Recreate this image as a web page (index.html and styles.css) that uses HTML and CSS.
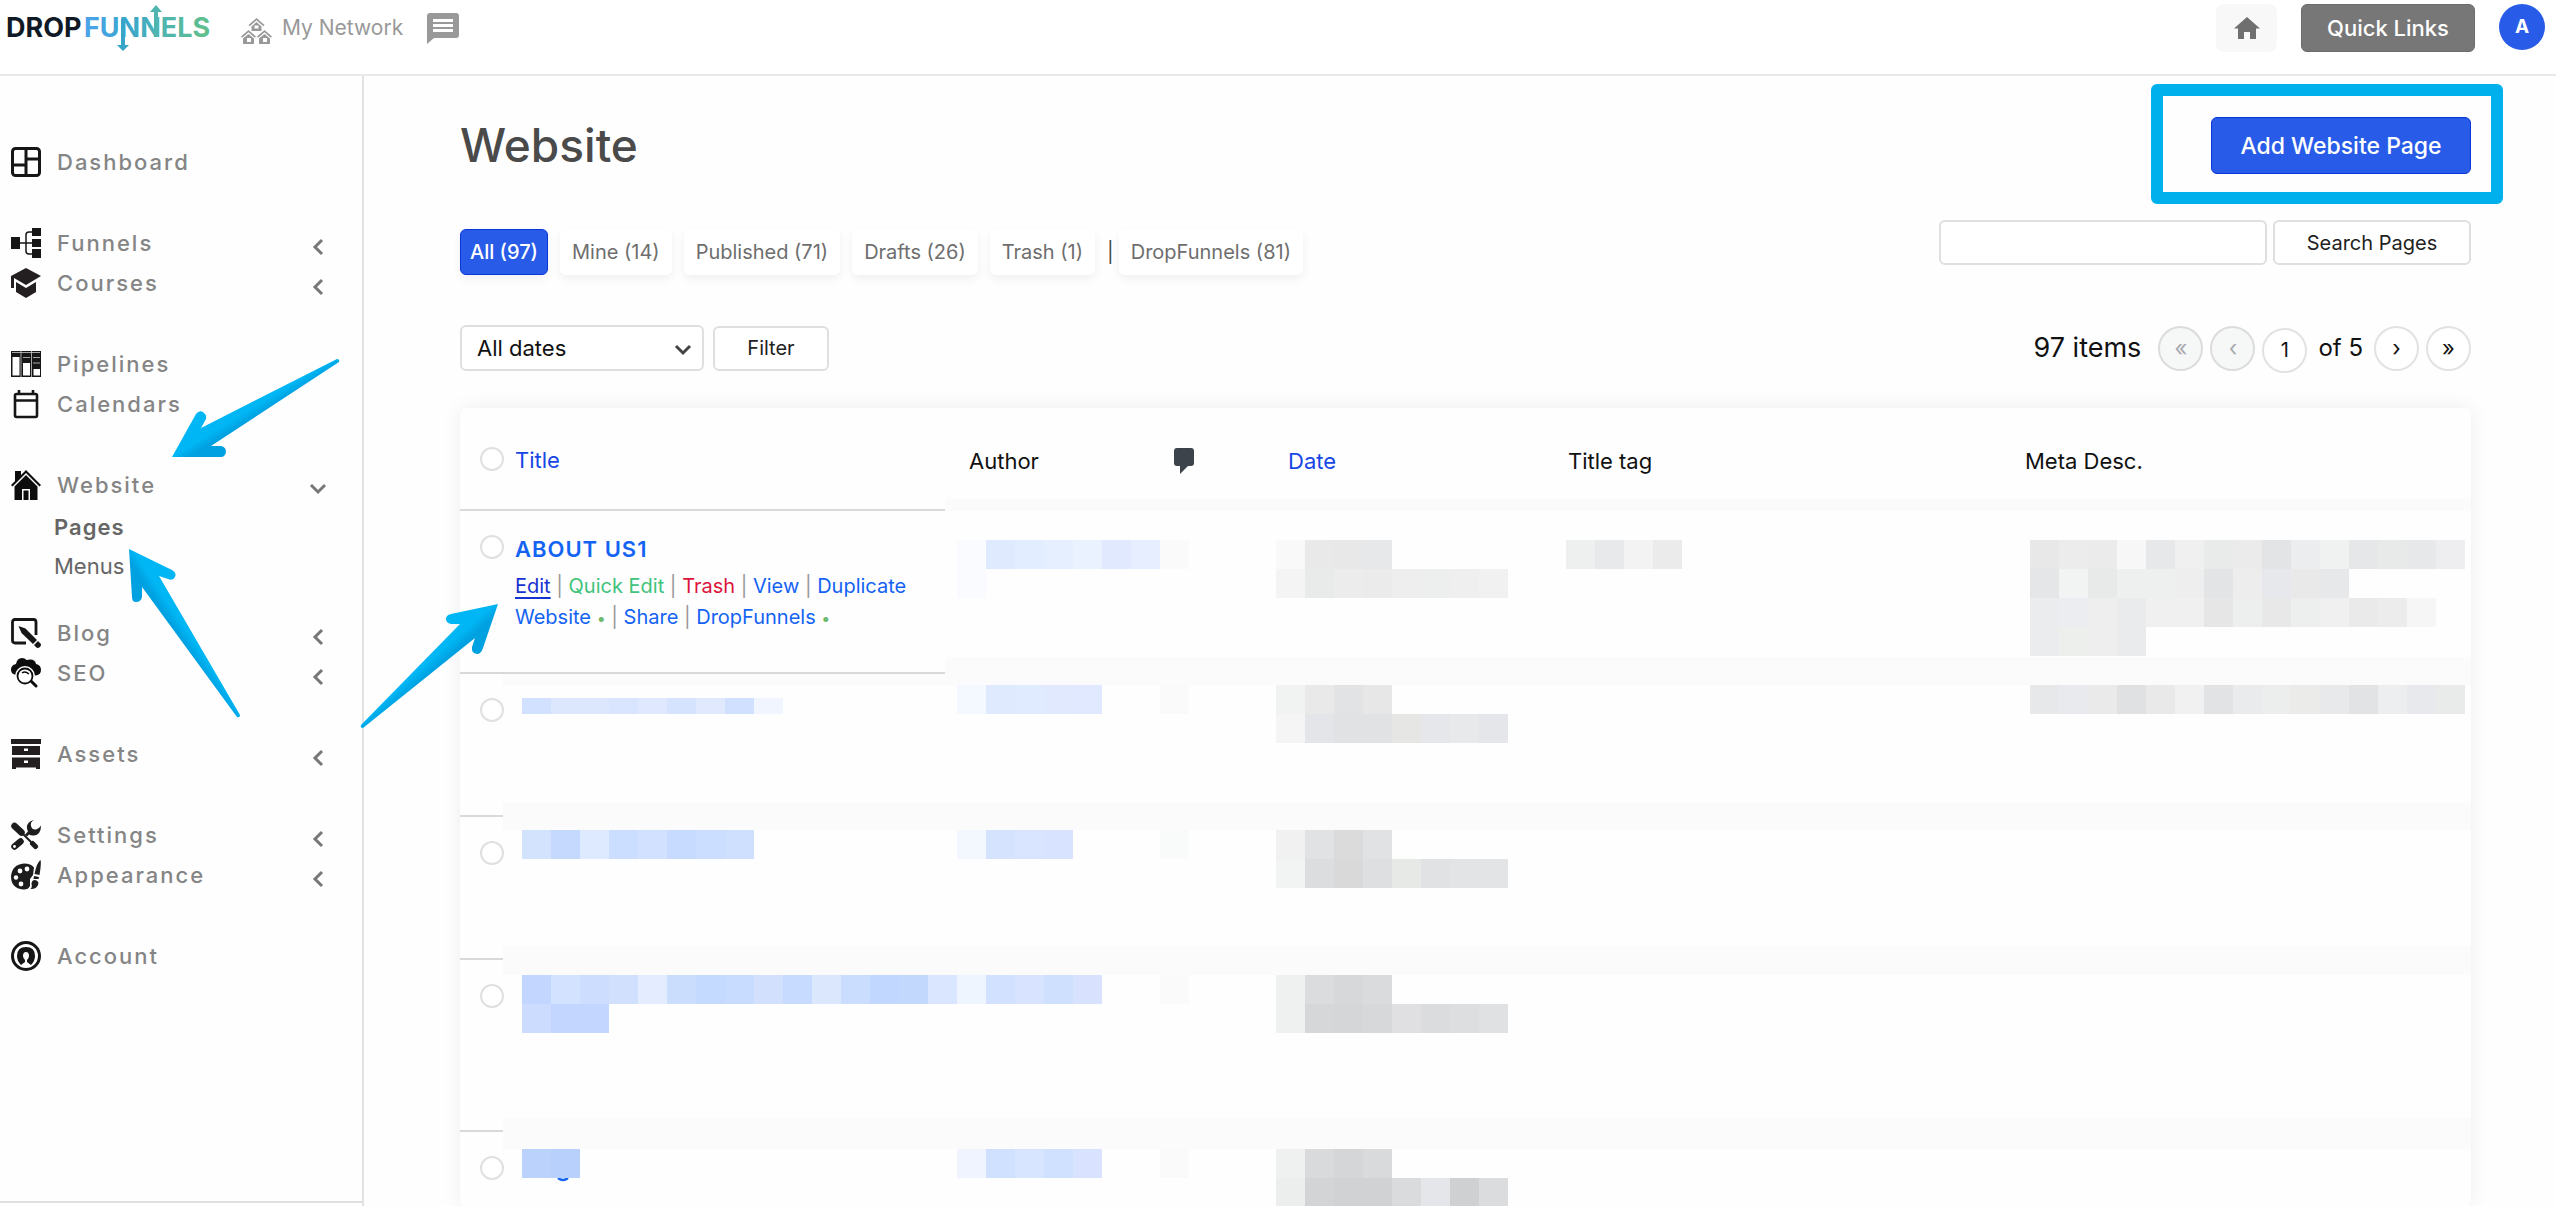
FILE: index.html
```html
<!DOCTYPE html>
<html lang="en">
<head>
<meta charset="utf-8">
<title>Website - DropFunnels</title>
<link rel="stylesheet" href="styles.css">
</head>
<body>
<header class="topbar">
  <a class="logo" href="#" aria-label="DropFunnels">
    <svg width="206" height="48" viewBox="0 0 206 48">
      <defs>
        <linearGradient id="brand" gradientUnits="userSpaceOnUse" x1="80" y1="0" x2="200" y2="0">
          <stop offset="0" stop-color="#4ba3ea"/><stop offset=".35" stop-color="#3aa6cc"/><stop offset=".65" stop-color="#4fb5ae"/><stop offset="1" stop-color="#5fbf8e"/>
        </linearGradient>
      </defs>
      <text class="logo-text" x="0" y="33" fill="#101a26">DROP</text>
      <text class="logo-text" x="78" y="33" fill="url(#brand)">FUNNELS</text>
      <path fill="#4fb5ae" d="M148 33V8h-4l6-7 6 7h-4v25z"/>
      <path fill="#37a5c8" d="M115 15h4v26h4l-6 6-6-6h4z"/>
    </svg>
  </a>
  <a class="network" href="#">
    <svg width="31" height="26" viewBox="0 0 31 26" fill="#999">
      <path d="M15.500 0 7.500 7l1.200 1.200 6.800-5.900 6.800 5.900L23.500 7zM15.500 4l-5 4.400V13h10V8.400zM13.500 7.500h4v3h-4z" fill-rule="evenodd"/>
      <path id="hut" d="M7.500 12 0 18.500l1.200 1.200 6.300-5.400 6.300 5.400 1.200-1.200zM7.500 16l-5.500 4.600V26h11v-5.400zM6 20h4v4H6z" fill-rule="evenodd"/>
      <use href="#hut" x="16"/>
    </svg>
    <span>My Network</span>
  </a>
  <a class="chat" href="#" aria-label="Messages">
    <svg width="32" height="31" viewBox="0 0 32 31"><path fill="#999" d="M3 0h26a3 3 0 0 1 3 3v19a3 3 0 0 1-3 3H7l-7 6V3a3 3 0 0 1 3-3z"/><path stroke="#fff" stroke-width="3" d="M6 7.500h20M6 12.500h20M6 17.500h20"/></svg>
  </a>
  <div class="topbar-end">
    <button class="home" aria-label="Home"><svg width="26" height="22" viewBox="0 0 26 22"><path fill="#6f6f6f" d="M13 0 0 11.500h4V22h6v-7h6v7h6V11.500h4z"/></svg></button>
    <button class="quick">Quick Links</button>
    <button class="avatar" aria-label="Profile">A</button>
  </div>
</header>

<div class="layout">
<nav class="sidebar">
  <ul class="group">
    <li><a class="item" href="#"><svg class="icon" viewBox="0 0 30 30"><g fill="none" stroke="#161616" stroke-width="3"><rect x="1.500" y="1.500" width="27" height="27" rx="3"/><path d="M15 2v26M2 18h13M15 12h13"/></g></svg>Dashboard</a></li>
  </ul>
  <ul class="group">
    <li><a class="item" href="#"><svg class="icon" viewBox="0 0 30 30"><path fill="#161616" d="M0 9h9v12H0zM21 0h9v8h-9zM21 11h9v8h-9zM21 21h9v9h-9z"/><path fill="none" stroke="#161616" stroke-width="1.500" d="M8 15h14M22 4h-4q-3 0-3 3v16q0 3 3 3h4"/></svg>Funnels<svg class="chev" viewBox="0 0 12 18"><path d="M10 2 3 9l7 7"/></svg></a></li>
    <li><a class="item" href="#"><svg class="icon" viewBox="0 0 30 30" fill="#231f20"><path d="M15 0 30 8 15 17 3 10v10H0V8zM5 14l10 6 10-6v10l-10 6-10-6z"/></svg>Courses<svg class="chev" viewBox="0 0 12 18"><path d="M10 2 3 9l7 7"/></svg></a></li>
  </ul>
  <ul class="group">
    <li><a class="item" href="#"><svg class="icon" viewBox="0 0 30 30"><path fill="#161616" fill-rule="evenodd" d="M0 2h30v26H0zM1.500 8h7v18.500h-7zM12 14h7v12.500h-7zM22.500 20h6.500v6.500h-6.500z"/><path stroke="#ccc" stroke-width=".8" d="M10 2v26M20.500 2v26M1 3.500h28M12 8.500h7M22 8.500h7M22 14h7"/></svg>Pipelines</a></li>
    <li><a class="item" href="#"><svg class="icon" viewBox="0 0 30 30"><g fill="none" stroke="#161616" stroke-width="2.600"><rect x="4" y="5" width="22" height="23" rx="1.500"/><path d="M4 11.500h22M8 1v4M22 1v4"/></g></svg>Calendars</a></li>
  </ul>
  <ul class="group group-open">
    <li><a class="item" href="#"><svg class="icon" viewBox="0 0 30 30" fill="#0d0d0d"><path d="M4 1h6v4l-6 6zM15 0 0 15l1.500 1.500L15 3l13.500 13.500L30 15z"/><path fill-rule="evenodd" d="M15 5 3.500 16.500V30h23V16.500zM11 30V19h8v11zM12.500 30h5v-9.500h-5z"/></svg>Website<svg class="chev chev-down" viewBox="0 0 18 12"><path d="m2 2 7 7 7-7"/></svg></a>
      <ul class="submenu">
        <li><a class="subitem current" href="#">Pages</a></li>
        <li><a class="subitem" href="#">Menus</a></li>
      </ul>
    </li>
  </ul>
  <ul class="group">
    <li><a class="item" href="#"><svg class="icon" viewBox="0 0 30 30"><path fill="none" stroke="#161616" stroke-width="2.800" d="M15 25H4q-2.500 0-2.500-2.500V4Q1.500 1.500 4 1.500h18.500Q25 1.500 25 4v13"/><path fill="#161616" d="m7.500 8 7 2.500L26 22l-4 4L10.500 15zM27 23l3 3q0 4-4 4l-3-3z"/></svg>Blog<svg class="chev" viewBox="0 0 12 18"><path d="M10 2 3 9l7 7"/></svg></a></li>
    <li><a class="item" href="#"><svg class="icon" viewBox="0 0 30 30"><path fill="#0d0d0d" d="M5 17Q0 16 0 11.500 0 7 5 6 6 0 11 0q3 0 4.500 2Q24 0 25 6q5 1 5 6 0 4.500-5 5.500z"/><circle cx="14" cy="18" r="10" fill="#fff"/><path fill="none" stroke="#0d0d0d" stroke-width="3" stroke-linecap="round" d="m20 23 5 5"/><circle cx="14" cy="18" r="7.500" fill="#fff" stroke="#0d0d0d" stroke-width="1.800"/><path fill="none" stroke="#0d0d0d" stroke-width="1.500" d="M11 15q3-2.500 7 1"/></svg>SEO<svg class="chev" viewBox="0 0 12 18"><path d="M10 2 3 9l7 7"/></svg></a></li>
  </ul>
  <ul class="group">
    <li><a class="item" href="#"><svg class="icon" viewBox="0 0 30 30"><path fill="#231f20" fill-rule="evenodd" d="M0 0h30v5H0zM1 7h28v9H1zM13 9.500v2.500h4V9.500zM1 18.500h28V30h-4v-1.500H5V30H1zM13 21.500V24h4v-2.500z"/></svg>Assets<svg class="chev" viewBox="0 0 12 18"><path d="M10 2 3 9l7 7"/></svg></a></li>
  </ul>
  <ul class="group">
    <li><a class="item" href="#"><svg class="icon" viewBox="0 0 30 30"><g fill="none" stroke="#1d1d1d" stroke-linecap="round"><path stroke-width="6.500" d="m3.500 6 7 6.500"/><path stroke-width="2" d="m12 14 9 9"/><path stroke-width="5" d="m21.500 23.500 3 3"/><path stroke-width="6.500" d="m3.500 26.500 6-5"/></g><path fill="#1d1d1d" d="M23 0q-4 2-3 6 1 4 5 3.500 3-.5 5-4 0 9-7 10-3 .4-5-1l-2 2-2-2 3-3Q13 3 23 0z"/><circle cx="3.500" cy="26.500" r="1.400" fill="#fff"/></svg>Settings<svg class="chev" viewBox="0 0 12 18"><path d="M10 2 3 9l7 7"/></svg></a></li>
    <li><a class="item" href="#"><svg class="icon" viewBox="0 0 30 30"><path fill="#1d1d1d" d="M13 3.500q7 0 10 4L22 15l-3 4 0 7q-2 4-7 3.500Q0 28 0 16.500 1 4.500 13 3.500zM29.500 0q1 3-1 15l-5-1Q26 2 29.500 0zM23 16l5 1-.5 2h-5zM19.500 29q2-2 1-5 0-4 3.500-4 4.500 1 3 5-2 4.500-7.500 4z"/><g fill="#fff"><circle cx="9" cy="11" r="2.400"/><circle cx="16" cy="9" r="2.400"/><circle cx="5" cy="17.500" r="2.200"/><circle cx="10" cy="24" r="2.400"/></g></svg>Appearance<svg class="chev" viewBox="0 0 12 18"><path d="M10 2 3 9l7 7"/></svg></a></li>
  </ul>
  <ul class="group">
    <li><a class="item" href="#"><svg class="icon" viewBox="0 0 30 30"><circle cx="15" cy="15" r="13.500" fill="none" stroke="#161616" stroke-width="3"/><path fill="#161616" d="M10 24Q6 20 6 15q0-9 9-9t9 9q0 5-4 9l-4-3v-2q2-2 2-4 0-4-3-4t-3 4q0 2 2 4v2z"/></svg>Account</a></li>
  </ul>
  <hr class="sidebar-end">
</nav>

<main class="main">
  <div class="heading">
    <h1>Website</h1>
    <div class="callout"><button class="add">Add Website Page</button></div>
  </div>

  <div class="toolbar">
    <div class="tabs">
      <a class="tab active" href="#">All (97)</a>
      <a class="tab" href="#">Mine (14)</a>
      <a class="tab" href="#">Published (71)</a>
      <a class="tab" href="#">Drafts (26)</a>
      <a class="tab" href="#">Trash (1)</a>
      <span class="tab-sep">|</span>
      <a class="tab" href="#">DropFunnels (81)</a>
    </div>
    <form class="search">
      <input class="field" type="text" aria-label="Search Pages">
      <button class="btn btn-search" type="button">Search Pages</button>
    </form>
  </div>

  <div class="filters">
    <div class="dates">
      <select class="select" aria-label="Filter by date"><option>All dates</option></select>
      <svg class="select-arrow" viewBox="0 0 18 12"><path d="m2 2 7 7 7-7"/></svg>
    </div>
    <button class="btn btn-filter">Filter</button>
    <div class="pager">
      <span class="count">97 items</span>
      <button class="round" disabled>«</button>
      <button class="round" disabled>‹</button>
      <input class="round page-no" type="text" value="1" aria-label="Current page">
      <span class="total">of 5</span>
      <button class="round">›</button>
      <button class="round">»</button>
    </div>
  </div>

  <table class="pages">
    <colgroup><col class="c-check"><col class="c-title"><col class="c-author"><col class="c-comments"><col class="c-date"><col class="c-tag"><col class="c-meta"></colgroup>
    <thead>
      <tr>
        <th class="check ruled"><input type="checkbox" aria-label="Select all"></th>
        <th class="title ruled"><a href="#">Title</a></th>
        <th class="inset">Author</th>
        <th><svg width="20" height="26" viewBox="0 0 20 26" role="img" aria-label="Comments"><path fill="#3c434a" d="M3 0h14a3 3 0 0 1 3 3v12a3 3 0 0 1-3 3h-3l-8 8v-8H3a3 3 0 0 1-3-3V3a3 3 0 0 1 3-3z"/></svg></th>
        <th class="inset"><a href="#">Date</a></th>
        <th>Title tag</th>
        <th class="snug">Meta Desc.</th>
      </tr>
    </thead>
    <tbody>
      <tr>
        <td class="check ruled"><input type="checkbox" aria-label="Select ABOUT US1"></td>
        <td class="title ruled">
          <a class="page-name" href="#">ABOUT US1</a>
          <div class="actions"><a class="edit" href="#">Edit</a> <span>|</span> <a class="quick-edit" href="#">Quick Edit</a> <span>|</span> <a class="trash" href="#">Trash</a> <span>|</span> <a href="#">View</a> <span>|</span> <a href="#">Duplicate Website</a> <i>•</i> <span>|</span> <a href="#">Share</a> <span>|</span> <a href="#">DropFunnels</a> <i>•</i></div>
        </td>
        <td class="band" data-cells="fafbff dfeaff e2edff e5efff ebf2ff e1e9ff e7eeff/fafbff"></td>
        <td class="band flush" data-cells="fafafa"></td>
        <td class="band" data-cells="f9f9f9 e9e9e9 e8e8e8 e7e8e9/f4f4f4 e8ebea ececec ebebeb eeeeee edefee efefef f1f1f1"></td>
        <td class="band" data-cells="eeefef e8e9eb f3f3f3 ebebeb"></td>
        <td class="band" data-cells="e8e8e8 ececec ebebeb f7f7f7 e7e8ea eff0ef e9ebea ecebeb e3e4e6 ecedef f0f2f1 e5e7e8 e8eae9 e7e8ea eeeef1/e5e6e8 f2f4f3 e8eae9 eef0ef eef0ef eeeeee e3e4e6 ededed e7e8eb e9e9e9 e7e8ea/ebecee ecedf0 eeeeee eaebed f0f0f0 f0f0f0 e6e6e6 ecefed e8e8e8 edefee f0f0f0 eaeaea ececec f6f6f6/ebecee edefed eeeeee eaebed"></td>
      </tr>
      <tr>
        <td class="check ruled"><input type="checkbox" aria-label="Select row 2"></td>
        <td class="title short band" data-height="16" data-cells="d2e1ff dce6fd dce6fd d9e5ff dfe8ff d6e3ff e1e9ff d1e0ff f0f5ff"></td>
        <td class="band" data-cells="f4f8ff dfeaff e1ebff e1e9ff e0e9ff"></td>
        <td class="band flush" data-cells="fafafa"></td>
        <td class="band" data-cells="f1f3f2 e9e9e9 e2e3e5 e7e7e7/f5f5f5 e4e5e8 e1e2e4 e1e2e4 e6e6e5 e6e7ea e8e9ea e5e6e9"></td>
        <td class="band"></td>
        <td class="band" data-cells="e7e8ea e9eaed eaeaea e0e1e3 e9e9e9 f1f1f1 e2e3e5 eaebed eceeed ebebea e8e9eb e2e3e5 edeef0 e8e9ec e9ebea"></td>
      </tr>
      <tr>
        <td class="check ruled"><input type="checkbox" aria-label="Select row 3"></td>
        <td class="title band" data-cells="d3e3fd c5d9ff deeaff cbdeff d1e1ff c6dbff ccdeff cfe0ff"></td>
        <td class="band" data-cells="f3f8ff d6e3ff d9e4ff d8e4ff"></td>
        <td class="band flush" data-cells="f9fbfa"></td>
        <td class="band" data-cells="f0f1f0 e1e2e4 dbdbdc e1e2e4/f2f4f3 dcddde d9d9da dedfe1 e7e9e7 e1e2e4 e3e4e6 e3e4e6"></td>
        <td class="band"></td>
        <td class="band"></td>
      </tr>
      <tr>
        <td class="check ruled"><input type="checkbox" aria-label="Select row 4"></td>
        <td class="title band" data-cells="c2d6ff d2e2ff cdddfd d1e1fd e3edff cbddfd c5daff c8dcff d3e0fd c6dbff dae7fc cbddff c2d7ff c2d8fd dae6ff/ccdcff c2d6ff c2d6ff"></td>
        <td class="band" data-cells="eef5ff d2e1ff d8e4ff cfe0ff d8e2ff"></td>
        <td class="band flush" data-cells="fafafa"></td>
        <td class="band" data-cells="eff0f0 dbdcde d7d8d9 dadbdd/eff0f0 d6d7d9 d5d6d8 d7d8d9 e0e0e2 dbdcde dddedf e0e1e2"></td>
        <td class="band"></td>
        <td class="band"></td>
      </tr>
      <tr>
        <td class="check"><input type="checkbox" aria-label="Select row 5"></td>
        <td class="title band" data-cells="bbd3fc b8d1fc"><svg class="peek" width="12" height="4" viewBox="0 0 12 4"><path fill="none" stroke="#1463f3" stroke-width="2.500" d="M1 0q5 4 10 0"/></svg></td>
        <td class="band" data-cells="eff4ff d0e0ff d8e5ff d0e0ff d9e3ff"></td>
        <td class="band flush" data-cells="fafafa"></td>
        <td class="band" data-cells="eff0f0 d9dadc d5d6d8 d9dadc/eceeed d3d4d6 d1d2d3 d1d2d4 dadbdc e5e6e9 cfd0d1 dbdcde"></td>
        <td class="band"></td>
        <td class="band"></td>
      </tr>
    </tbody>
  </table>
</main>
</div>

<svg class="arrows" width="520" height="740" viewBox="0 0 520 740" aria-hidden="true">
  <defs>
    <linearGradient id="a1" gradientUnits="userSpaceOnUse" x1="200" y1="430" x2="211" y2="448"><stop offset=".4" stop-color="#00b6f4"/><stop offset=".8" stop-color="#00a1e1"/></linearGradient>
    <linearGradient id="a2" gradientUnits="userSpaceOnUse" x1="162" y1="578" x2="144" y2="590"><stop offset=".4" stop-color="#00b6f4"/><stop offset=".8" stop-color="#00a1e1"/></linearGradient>
    <linearGradient id="a3" gradientUnits="userSpaceOnUse" x1="459" y1="623" x2="474" y2="640"><stop offset=".4" stop-color="#00b6f4"/><stop offset=".8" stop-color="#00a1e1"/></linearGradient>
  </defs>
  <path fill="url(#a1)" d="M172 457 196 414q3-4 7-2 4 3 3 7l-5 9 136-69q3 0 2 3L211 446h10q5 1 5 6-1 5-5 5z"/>
  <path fill="url(#a2)" d="m129 549 43 21q5 3 3 7-2 4-7 2l-9-3 81 139q0 3-3 2l-95-130v10q-1 5-6 5-4 0-4-5z"/>
  <path fill="url(#a3)" d="m498 604-15 44q-2 6-6 6-6-1-5-7l3-9-112 90q-3 0-2-3l99-101h-9q-5-1-5-5 0-4 5-5z"/>
</svg>
<script src="mosaic.js"></script>
</body>
</html>
```
FILE: styles.css
```css
* { box-sizing: border-box; }
body { margin: 0; background: #fefefe; color: #111; font: 21px/30px Inter, "Open Sans", sans-serif; position: relative; min-height: 100vh; display: flex; flex-direction: column; }
a { color: #1463f3; text-decoration: none; }
button, input, select { font: inherit; color: inherit; margin: 0; }
button { cursor: pointer; }
ul { list-style: none; margin: 0; padding: 0; }
svg { display: block; flex: none; }

.topbar { display: flex; align-items: flex-start; height: 76px; padding: 4px 11px 0 6px; border-bottom: 2px solid #e9e9e9; background: #fff; }
.logo-text { font: 700 27px Inter, sans-serif; }
.network { display: flex; gap: 10px; margin-left: 29px; color: #999; line-height: 48px; }
.network svg { margin-top: 14px; }
.chat { margin: 9px 0 0 24px; }
.topbar-end { display: flex; margin-left: auto; gap: 24px; }
.home { width: 61px; height: 48px; border: 0; border-radius: 8px; background: #f8f8f8; display: grid; place-items: center; padding: 0; }
.quick { height: 48px; width: 174px; padding: 0; border: 1px solid #6b6b6b; border-radius: 6px; background: #777; color: #fff; font-size: 22px; font-weight: 500; }
.avatar { width: 46px; height: 46px; padding: 0; border: 0; border-radius: 50%; background: #285be7; color: #fff; font-size: 19px; font-weight: 700; }

.layout { display: flex; flex: 1; }
.sidebar { display: flex; flex-direction: column; flex: none; width: 364px; border-right: 2px solid #e2e2e2; padding: 66px 0 4px; }
.sidebar-end { width: 100%; height: 2px; margin: auto 0 0; border: 0; background: #e0e0e0; }
.group { margin-bottom: 41px; padding: 0 38px 0 11px; }
.group-open { margin-bottom: 27px; }
.item { display: flex; align-items: center; height: 40px; gap: 16px; color: #858585; font-size: 22px; font-weight: 500; letter-spacing: 2px; }
.icon { width: 30px; height: 30px; }
.chev { width: 12px; height: 18px; margin: 8px 0 0 auto; fill: none; stroke: #777; stroke-width: 3; }
.chev-down { width: 18px; height: 12px; margin-right: -3px; }
.submenu { padding: 3px 0 0 43px; }
.subitem { display: block; line-height: 39px; color: #666; font-size: 22px; }
.current { font-weight: 600; letter-spacing: 1px; }

.main { flex: 1; min-width: 0; padding: 41px 85px 0 96px; }
.heading { display: flex; justify-content: space-between; align-items: center; height: 57px; }
h1 { margin: 0; font-size: 46px; line-height: 57px; font-weight: 500; color: #4a4a4a; }
.callout { position: relative; }
.callout::after { content: ""; position: absolute; inset: -33px -32px -30px -60px; border: 12px solid #00b0ec; border-radius: 6px; pointer-events: none; }
.add { display: block; width: 260px; height: 57px; padding: 0; border: 1px solid #0a35d8; border-radius: 6px; background: #285be7; color: #fff; font-size: 23px; font-weight: 500; }

.toolbar { display: flex; justify-content: space-between; align-items: flex-start; margin-top: 46px; }
.tabs { display: flex; gap: 12px; padding-top: 9px; }
.tab { height: 46px; line-height: 46px; padding: 0 12px; border-radius: 6px; background: #fff; color: #6e6e6e; font-size: 20px; box-shadow: 0 4px 10px rgba(0,0,0,.06); }
.tab.active { background: #285be7; color: #fff; font-weight: 500; padding: 0 9px; border: 1px solid #0a35d8; line-height: 44px; }
.tab-sep { line-height: 46px; font-size: 20px; margin-right: -7px; color: #444; }
.search { display: flex; gap: 6px; }
.field { width: 328px; height: 45px; border: 2px solid #dfdfdf; border-radius: 6px; background: #fff; }
.btn { height: 45px; padding: 0; border: 2px solid #dfdfdf; border-radius: 6px; background: #fff; color: #222; font-size: 20px; }
.btn-search { width: 198px; }
.btn-filter { width: 116px; }

.filters { display: flex; align-items: center; gap: 9px; margin-top: 48px; height: 50px; }
.dates { position: relative; }
.select { width: 244px; height: 46px; padding: 0 15px; border: 2px solid #dfdfdf; border-radius: 6px; background: #fff; appearance: none; font-size: 22px; display: block; }
.select-arrow { position: absolute; right: 12px; top: 19px; width: 18px; height: 12px; fill: none; stroke: #444; stroke-width: 3; pointer-events: none; }
.pager { display: flex; align-items: center; gap: 7px; margin-left: auto; font-size: 27px; }
.count { margin-right: 10px; }
.total { margin: 0 4px; font-size: 24px; }
.round { width: 45px; height: 45px; padding: 0; border: 2px solid #e2e2e2; border-radius: 50%; background: #fff; text-align: center; font-size: 22px; line-height: 38px; }
.round:disabled { background: #f6f7f7; border-color: #dcdcde; color: #a7aaad; }
.page-no { font-size: 20px; margin-top: 4px; }

.pages { width: 100%; margin-top: 35px; table-layout: fixed; border-collapse: separate; border-spacing: 0; border-radius: 6px; background: #fefefe; box-shadow: 0 0 20px rgba(0,0,0,.07); }
.c-check { width: 43px; }
.c-title { width: 442px; }
.c-author { width: 215px; }
.c-comments { width: 104px; }
.c-date { width: 290px; }
.c-tag { width: 464px; }
th { height: 103px; padding: 2px 0 0 14px; text-align: left; font-size: 22px; font-weight: 400; vertical-align: middle; }
th.inset { padding-left: 24px; }
th.snug { padding-left: 7px; }
th a { color: #1646e6; }
th:not(.ruled) { background: linear-gradient(#fbfbfb, #fbfbfb) 0 100% / 100% 12px no-repeat; }
td { padding: var(--top, 12px) 0 0 12px; vertical-align: top; height: 143px; }
.title { padding-left: 12px; }
.ruled { border-bottom: 2px solid #d9d9d9; }
.band { background: linear-gradient(#fbfbfb, #fbfbfb) 0 0 / 100% var(--top, 12px) no-repeat, linear-gradient(#fbfbfb, #fbfbfb) 0 100% / 100% 14px no-repeat; }
td.flush { padding-left: 0; }
td.title.band { padding-left: 19px; }
td.title.short { padding-top: 24px; }
tbody tr:nth-child(1) { --top: 29px; }
tbody tr:nth-child(1) td { height: 163px; }
tbody tr:nth-child(1) .band { background-size: 100% 0, 100% 17px; }
tbody tr:nth-child(1) .title { padding-top: 23px; }
tbody tr:nth-child(2) { --top: 11px; }
tbody tr:nth-child(3) { --top: 13px; }
tbody tr:nth-child(4) { --top: 15px; }
tbody tr:nth-child(4) td { height: 172px; }
tbody tr:nth-child(5) { --top: 17px; }
tbody tr:nth-child(5) td { height: 73px; }
tbody tr:nth-child(5) .band { background-size: 100% var(--top), 100% 0; }
.check, tbody tr:nth-child(n) td.check { padding: 24px 0 0 20px; }
th.check { padding: 0 0 0 20px; }
.check input { display: block; appearance: none; width: 24px; height: 24px; border: 2px solid #e0e0e0; border-radius: 50%; background: #fff; }
.page-name { font-size: 22px; font-weight: 600; letter-spacing: 1px; }
.actions { line-height: 31px; font-size: 20px; color: #999; margin-top: 6px; padding-right: 16px; }
.actions .edit { color: #1632d0; text-decoration: underline; text-underline-offset: 4px; }
.actions .quick-edit { color: #3fc37b; }
.actions .trash { color: #dc143c; }
.actions i { color: #6cb96c; font-style: normal; font-size: 16px; }
.mosaic { overflow: visible; shape-rendering: crispEdges; }
.peek { margin-left: 35px; }
.arrows { position: absolute; left: 0; top: 0; pointer-events: none; }
```
FILE: mosaic.js
```js
// Draws the redacted cell values: rows are split by "/", tiles by spaces.
const TILE = 29;
const NS = "http://www.w3.org/2000/svg";
document.querySelectorAll("[data-cells]").forEach((cell) => {
  const rows = cell.dataset.cells.split("/").map((r) => r.split(" "));
  const tall = Number(cell.dataset.height || TILE);
  const svg = document.createElementNS(NS, "svg");
  svg.setAttribute("class", "mosaic");
  svg.setAttribute("width", TILE * Math.max(...rows.map((r) => r.length)));
  svg.setAttribute("height", tall * rows.length);
  rows.forEach((row, y) => row.forEach((color, x) => {
    const rect = document.createElementNS(NS, "rect");
    rect.setAttribute("x", x * TILE);
    rect.setAttribute("y", y * tall);
    rect.setAttribute("width", TILE);
    rect.setAttribute("height", tall);
    rect.setAttribute("fill", "#" + color);
    svg.append(rect);
  }));
  cell.prepend(svg);
});
```
